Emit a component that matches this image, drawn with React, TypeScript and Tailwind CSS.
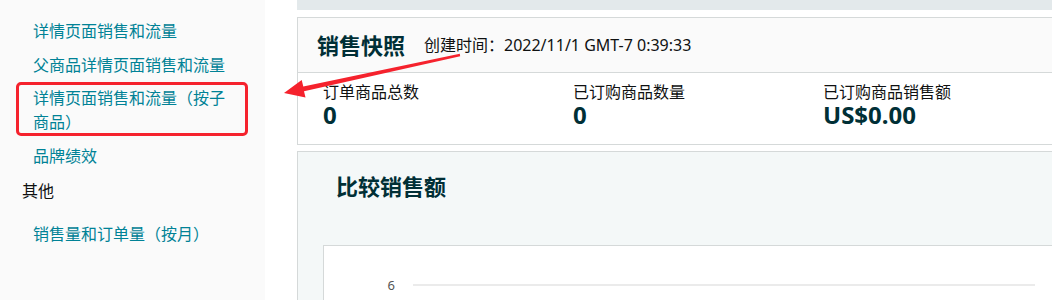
const font = { fontFamily: '"Noto Sans", "Noto Sans CJK SC", sans-serif' };

const navLink = "block text-[16px] leading-[24px] text-[#008296] pl-[33px] pr-[30px]";

const Sidebar = () => (
  <aside className="relative w-[265px] shrink-0 h-full bg-[#fafafa] pt-[19px]">
    <div className="flex flex-col gap-[9.5px]">
      <a className={navLink}>详情页面销售和流量</a>
      <a className={navLink}>父商品详情页面销售和流量</a>
      <a className={navLink}>详情页面销售和流量（按子商品）</a>
      <a className={navLink}>品牌绩效</a>
    </div>
    <div className="mt-[11px] pl-[22px] text-[16px] leading-[24px] text-[#0f1111]">其他</div>
    <div className="mt-[19px]">
      <a className={navLink}>销售量和订单量（按月）</a>
    </div>
    {/* annotation box */}
    <div className="absolute left-[16px] top-[82px] w-[232px] h-[54px] border-[3px] border-[#f5222d] rounded-[5px]" />
  </aside>
);

const Stat = ({ label, value }: { label: string; value: string }) => (
  <div className="w-[250px] shrink-0 flex flex-col">
    <div className="text-[16px] leading-[18px] text-[#0f1111]">{label}</div>
    <div className="text-[24px] leading-[28px] font-bold text-[#002f36]">{value}</div>
  </div>
);

export default function App() {
  return (
    <div className="relative flex w-[1052px] h-[300px] overflow-hidden bg-white" style={font}>
      <Sidebar />
      <main className="ml-[32px] w-[790px] shrink-0">
        <div className="h-[10px] bg-[#e3e9eb]" />

        <section className="mt-[7px] border border-[#d5d9d9] bg-white">
          <div className="h-[55px] bg-[#fafafa] border-b border-[#d5d9d9] flex items-center pl-[19px]">
            <h2 className="text-[22px] font-bold text-[#002f36] leading-[30px]">销售快照</h2>
            <span className="ml-[19px] text-[16px] text-[#0f1111] leading-[22px]">
              创建时间：2022/11/1 GMT-7 0:39:33
            </span>
          </div>
          <div className="h-[71px] flex pl-[25px] pt-[10px]">
            <Stat label="订单商品总数" value="0" />
            <Stat label="已订购商品数量" value="0" />
            <Stat label="已订购商品销售额" value="US$0.00" />
          </div>
        </section>

        <section className="mt-[6px] border border-[#d5d9d9] bg-[#f4f8f8] pt-[19px] pl-[25px] h-[200px]">
          <h2 className="pl-[13px] text-[22px] font-bold text-[#002f36] leading-[30px]">比较销售额</h2>
          <div className="mt-[44px] bg-white border border-[#d5d9d9] h-[120px]">
            <div className="flex items-center mt-[30px]">
              <span className="w-[71px] text-right text-[13px] leading-[18px] text-[#555]">6</span>
              <div className="ml-[18px] w-[622px] h-[2px] bg-[#ebebeb]" />
            </div>
          </div>
        </section>
      </main>

      {/* annotation arrow */}
      <svg className="absolute left-0 top-0 pointer-events-none" width="1052" height="300">
        <polygon points="284,93 301.7,80 303.3,86.4 459.8,53.8 460.2,56.2 304,91.2 305.5,97.6" fill="#f5222d" />
      </svg>
    </div>
  );
}
